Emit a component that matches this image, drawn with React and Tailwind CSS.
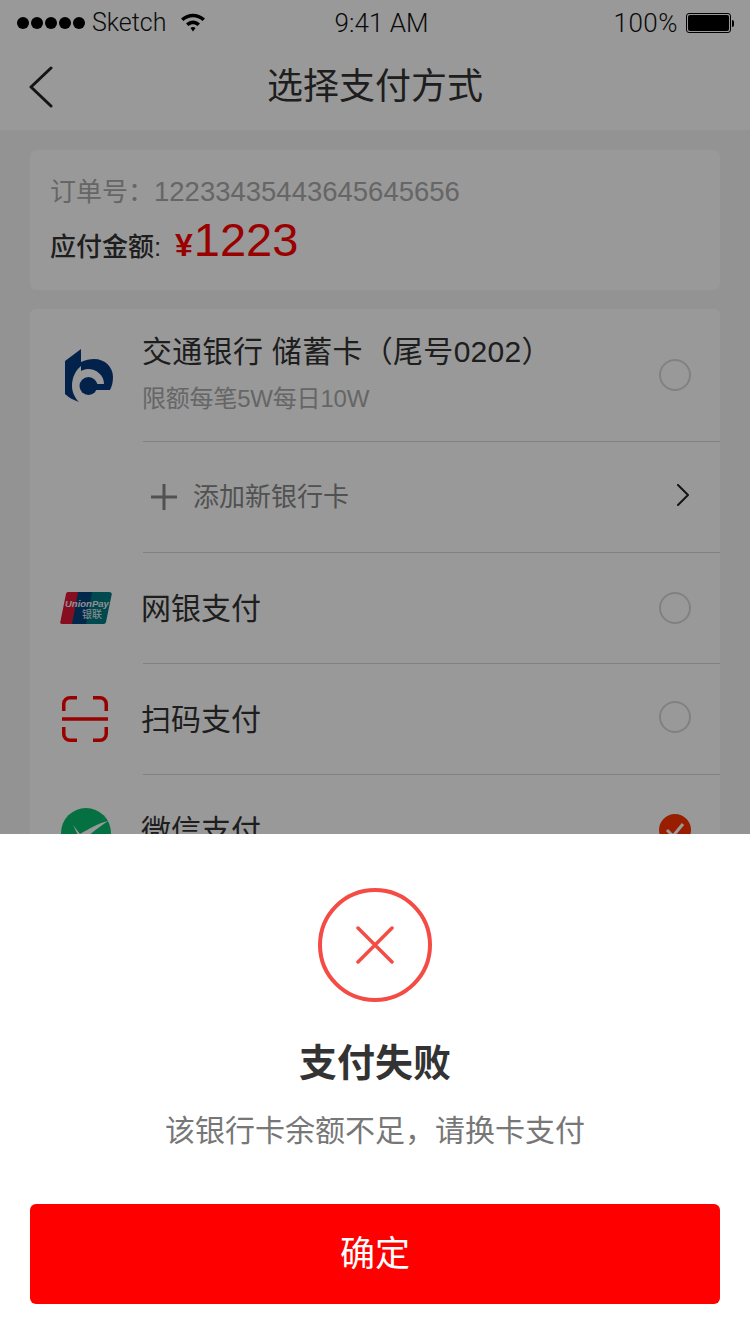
import React from 'react';

const font = { fontFamily: '"Liberation Sans", "Noto Sans CJK SC", sans-serif' };

const Radio = ({ checked }) =>
  checked ? (
    <svg width="32" height="32" viewBox="0 0 32 32">
      <circle cx="16" cy="16" r="16" fill="#ff3300" />
      <path d="M8 16l6 6 10-12" fill="none" stroke="#fff" strokeWidth="3" />
    </svg>
  ) : (
    <div className="w-8 h-8 rounded-full border-2 border-[#d8d8d8]" />
  );

const BankLogo = () => (
  <svg width="48" height="55" viewBox="0 0 48 55" fill="#063a7e">
    <path d="M0 13L16 1V18C11 22 7 29 7 38C7 44 10 50 14 54C8 52 3 49 0 46Z" />
    <path d="M16 14C20 12 25 11 29 11C40 11 48 19 48 29C48 34 47 38 45 42H30V36H39C39 27 31 21 23 21C20 21 18 22 16 23Z" />
    <circle cx="23.500" cy="38" r="9" />
  </svg>
);

const UnionPayLogo = () => (
  <svg width="52" height="32" viewBox="0 0 52 32">
    <path d="M8 0H22L16 32H2C0.500 32 0 31 0.300 30L6 2C6.300 0.800 7 0 8 0Z" fill="#e21836" />
    <path d="M18 0H36L30 32H12Z" fill="#00447c" />
    <path d="M32 0H49C51 0 52 1 51.700 2.500L46 30C45.700 31.200 45 32 43.500 32H26Z" fill="#007b84" />
    <text x="5" y="15" fontSize="9.500" fontWeight="700" fontStyle="italic" fill="#eee" style={font}>UnionPay</text>
    <text x="22" y="26" fontSize="10" fill="#eee" style={font}>银联</text>
  </svg>
);

const ScanIcon = () => (
  <svg className="-ml-[2px]" width="46" height="46" viewBox="0 0 46 46" fill="none" stroke="#ff0000" strokeWidth="3.500">
    <path d="M15 1.750H8A6.250 6.250 0 0 0 1.750 8V15" />
    <path d="M31 1.750H38A6.250 6.250 0 0 1 44.250 8V15" />
    <path d="M15 44.250H8A6.250 6.250 0 0 1 1.750 38V31" />
    <path d="M31 44.250H38A6.250 6.250 0 0 0 44.250 38V31" />
    <path d="M0 23H46" />
  </svg>
);

const WechatIcon = () => (
  <svg width="50" height="50" viewBox="0 0 50 50">
    <circle cx="25" cy="25" r="25" fill="#09bb6e" />
    <path d="M12 17L19 26C28 21 37 15 47 13C38 19 29 26 20 34C18 29 15 23 12 17Z" fill="#fff" />
  </svg>
);

const PayRow = ({ icon, label, checked, iconClass, radioClass }) => (
  <div className="h-[111px] flex items-center">
    <div className={`w-[113px] pr-[2px] flex justify-center shrink-0 ${iconClass || ''}`}>{icon}</div>
    <div className="flex-1 h-full flex items-center justify-between border-t border-[#d8d8d8] pr-[29px]">
      <span className="text-[30px] text-[#333] -ml-[2px]">{label}</span>
      <div className={radioClass}>
        <Radio checked={checked} />
      </div>
    </div>
  </div>
);

export default function App() {
  return (
    <div className="w-[750px] h-[1334px] relative overflow-hidden bg-[#f5f5f5]" style={font}>
      <div className="bg-white h-[130px]">
        <div className="h-[46px] flex items-center justify-between pl-[17px] pr-4 text-[26px] text-[#111] font-light" style={{ fontFamily: 'Roboto, sans-serif' }}>
          <div className="flex items-center w-[260px]">
            <div className="flex gap-[2px]">
              <span className="w-[12px] h-[12px] rounded-full bg-black" />
              <span className="w-[12px] h-[12px] rounded-full bg-black" />
              <span className="w-[12px] h-[12px] rounded-full bg-black" />
              <span className="w-[12px] h-[12px] rounded-full bg-black" />
              <span className="w-[12px] h-[12px] rounded-full bg-black" />
            </div>
            <span className="ml-[7px] text-[25px]">Sketch</span>
            <svg className="ml-[14px] -mt-[3px]" width="26" height="20" viewBox="0 0 26 20">
              <path d="M1 6.500C8 0 18 0 25 6.500L22.500 9C17 4 9 4 3.500 9Z" />
              <path d="M6 11.500C10.500 7.500 15.500 7.500 20 11.500L17.500 14C14.500 11.500 11.500 11.500 8.500 14Z" />
              <path d="M10.500 16C12 14.800 14 14.800 15.500 16L13 19.500Z" />
            </svg>
          </div>
          <span className="ml-[12px]">9:41 AM</span>
          <div className="flex items-center justify-end w-[260px]">
            <span className="tracking-[0.5px]">100%</span>
            <div className="ml-[8px] w-[45px] h-[20px] rounded-[3px] border border-black p-[1px]">
              <div className="w-full h-full bg-black rounded-[2px]" />
            </div>
            <div className="w-[2px] h-[7px] bg-black rounded-r-sm ml-[1px]" />
          </div>
        </div>
        <div className="h-[84px] flex items-center justify-center relative pb-[2px]">
          <svg className="absolute left-[28px] top-[20px]" width="26" height="42" viewBox="0 0 26 42" fill="none" stroke="#222" strokeWidth="3" strokeLinecap="round" strokeLinejoin="round">
            <path d="M23 2L3 21L23 40" />
          </svg>
          <span className="text-[36px] text-[#333]">选择支付方式</span>
        </div>
      </div>

      <div className="px-[30px] pt-5">
        <div className="bg-white rounded-md h-[140px] pl-5 pt-[24px]">
          <div className="flex text-[27.500px] leading-[36px] text-[#aaa]">
            <span className="w-[104px] shrink-0 text-[26px]">订单号：</span>
            <span>12233435443645645656</span>
          </div>
          <div className="flex items-baseline h-[54px] mt-[3px]">
            <span className="text-[26px] font-medium text-[#333] w-[125px] shrink-0">应付金额:</span>
            <span className="text-[32px] font-bold text-[#ff0000]">¥</span>
            <span className="text-[47px] leading-[54px] text-[#ff0000] ml-[1px]">1223</span>
          </div>
        </div>

        <div className="bg-white rounded-md mt-[19px] h-[700px]">
          <div className="h-[132px] flex items-center">
            <div className="w-[113px] flex justify-center pl-[4px] shrink-0">
              <BankLogo />
            </div>
            <div className="flex-1 flex items-center justify-between pr-[29px]">
              <div className="-ml-[1px] -mt-[3px]">
                <div className="text-[30px] leading-[40px] text-[#333] tracking-[0.3px]">交通银行 储蓄卡（尾号0202）</div>
                <div className="text-[24px] leading-[32px] mt-[11px] text-[#aaa] tracking-[-0.2px]">限额每笔5W每日10W</div>
              </div>
              <Radio />
            </div>
          </div>
          <div className="h-[111px] flex">
            <div className="w-[113px] shrink-0" />
            <div className="flex-1 flex items-center border-t border-[#d8d8d8] pr-[30px]">
              <svg className="ml-[7px]" width="28" height="28" viewBox="0 0 28 28" stroke="#888" strokeWidth="3">
                <path d="M14 1V27M1 14H27" />
              </svg>
              <span className="text-[26px] text-[#888] ml-[15px] flex-1">添加新银行卡</span>
              <svg className="-mt-[5px]" width="14" height="22" viewBox="0 0 14 22" fill="none" stroke="#222" strokeWidth="2" strokeLinecap="round" strokeLinejoin="round">
                <path d="M2 1L12 11L2 21" />
              </svg>
            </div>
          </div>
          <PayRow icon={<UnionPayLogo />} label="网银支付" />
          <PayRow icon={<ScanIcon />} label="扫码支付" radioClass="-mt-[4px]" />
          <PayRow icon={<WechatIcon />} label="微信支付" checked iconClass="mt-[6px]" />
        </div>
      </div>

      <div className="absolute inset-0 bg-black/40" />

      <div className="absolute left-0 right-0 bottom-0 h-[500px] bg-white flex flex-col items-center pt-[54px] px-[30px]">
        <div className="w-[114px] h-[114px] rounded-full border-4 border-[#f44c45] flex items-center justify-center">
          <svg width="38" height="38" viewBox="0 0 38 38" stroke="#f44c45" strokeWidth="3.500" strokeLinecap="round">
            <path d="M2 2L36 36M36 2L2 36" />
          </svg>
        </div>
        <div className="text-[38px] leading-[50px] font-bold text-[#333] mt-[36px]">支付失败</div>
        <div className="text-[30px] leading-[40px] text-[#777] mt-[23px]">该银行卡余额不足，请换卡支付</div>
        <button className="w-full h-[100px] rounded-md bg-[#ff0000] text-white text-[35px] mt-[53px]">确定</button>
      </div>
    </div>
  );
}
